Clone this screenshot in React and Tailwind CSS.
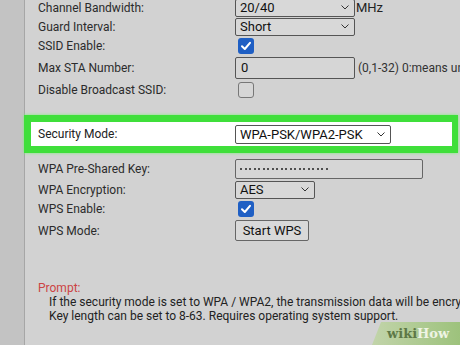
import React from 'react';

const font = { fontFamily: 'Roboto, "Liberation Sans", sans-serif' };

function Chevron() {
    return (
        <svg width="8" height="5" viewBox="0 0 8 5" className="shrink-0">
            <path d="M0.5 0.5 L4 4 L7.5 0.5" fill="none" stroke="#333" strokeWidth="1" />
        </svg>
    );
}

function Select({ value, className }) {
    return (
        <div className={`flex items-center justify-between border border-[#555] rounded-[2px] pl-[4px] pr-[5px] text-[13px] text-[#111] leading-none ${className}`}>
            <span>{value}</span>
            <Chevron />
        </div>
    );
}

function Checkbox({ checked }) {
    if (checked) {
        return (
            <div className="ml-[3px] w-[16px] h-[16px] rounded-[3px] bg-[#1f5fc4] flex items-center justify-center">
                <svg width="12" height="12" viewBox="0 0 12 12">
                    <path d="M2 6.3 L4.8 9 L10 2.8" fill="none" stroke="#fff" strokeWidth="2" strokeLinecap="round" strokeLinejoin="round" />
                </svg>
            </div>
        );
    }
    return <div className="ml-[3px] w-[16px] h-[16px] rounded-[3px] border border-[#777] bg-[#d6d6d6]" />;
}

function Row({ label, height, children }) {
    return (
        <div className={`flex items-center ${height}`}>
            <div className="w-[197px] shrink-0 text-[12px] text-[#2b2b2b]">{label}</div>
            <div className="flex items-center">{children}</div>
        </div>
    );
}

export default function App() {
    return (
        <div className="relative flex w-[460px] h-[345px] overflow-hidden bg-[#d2d2d2]" style={font}>
            {/* left strip */}
            <div className="w-[25px] shrink-0 bg-[#c3c3c3] border-r border-[#a6a6a6]" />

            {/* settings panel */}
            <div className="flex-1 pl-[13px] whitespace-nowrap">
                <div className="-mt-[2px]">
                    <Row label="Channel Bandwidth:" height="h-[19px]">
                        <Select value="20/40" className="w-[120px] h-[18px] bg-[#d8d8d8]" />
                        <span className="ml-[1px] text-[13px] text-[#222]">MHz</span>
                    </Row>
                    <Row label="Guard Interval:" height="h-[19px]">
                        <Select value="Short" className="w-[120px] h-[18px] bg-[#d8d8d8]" />
                    </Row>
                    <Row label="SSID Enable:" height="h-[20px]">
                        <Checkbox checked />
                    </Row>
                    <Row label="Max STA Number:" height="h-[24px]">
                        <div className="w-[120px] h-[22px] border border-[#555] rounded-[2px] bg-[#d6d6d6] pl-[5px] flex items-center text-[13px] text-[#111]">0</div>
                        <span className="ml-[3px] text-[12px] text-[#333]">(0,1-32) 0:means unlimited</span>
                    </Row>
                    <Row label="Disable Broadcast SSID:" height="h-[19px]">
                        <Checkbox />
                    </Row>
                </div>

                {/* highlighted row */}
                <div className="mt-[16px] -ml-[14px] w-[434px] h-[38px] border-[7px] border-r-[6px] border-[#3fdf3a] bg-white pl-[7px] flex items-center shadow-[0_0_3px_#7cf07a]">
                    <div className="w-[197px] shrink-0 text-[12px] text-[#222]">Security Mode:</div>
                    <Select value="WPA-PSK/WPA2-PSK" className="w-[156px] h-[19px] bg-white" />
                </div>

                <div className="mt-[5px]">
                    <Row label="WPA Pre-Shared Key:" height="h-[22px]">
                        <div className="w-[188px] h-[20px] border border-[#666] rounded-[2px] bg-[#d6d6d6] pl-[4px] flex items-center gap-[2.5px]">
                            {Array.from({ length: 20 }).map((_, i) => (
                                <span key={i} className="w-[2px] h-[2px] rounded-full bg-[#222]" />
                            ))}
                        </div>
                    </Row>
                    <Row label="WPA Encryption:" height="h-[19px]">
                        <Select value="AES" className="w-[80px] h-[18px] bg-[#d8d8d8]" />
                    </Row>
                    <Row label="WPS Enable:" height="h-[20px]">
                        <Checkbox checked />
                    </Row>
                    <Row label="WPS Mode:" height="h-[23px]">
                        <div className="w-[74px] h-[21px] border border-[#666] rounded-[2px] bg-[#d9d9d9] flex items-center justify-center text-[13px] text-[#111]">
                            Start WPS
                        </div>
                    </Row>
                </div>

                {/* prompt */}
                <div className="mt-[39px] text-[12px] leading-[14px]">
                    <div className="text-[#cc4444]">Prompt:</div>
                    <div className="pl-[11px] text-[#222]">
                        If the security mode is set to WPA / WPA2, the transmission data will be encrypted.
                    </div>
                    <div className="pl-[11px] text-[#222]">
                        Key length can be set to 8-63. Requires operating system support.
                    </div>
                </div>
            </div>

            {/* watermark */}
            <div className="absolute right-0 bottom-0 w-[88px] h-[23px] bg-gradient-to-r from-[#c2d4aa] to-[#9dc27c] [clip-path:polygon(9px_0,100%_0,100%_100%,0_100%)] flex items-center pl-[15px]">
                <span className="text-[13px] font-bold text-[#5d7846]" style={{ fontFamily: '"DejaVu Serif", serif' }}>wiki</span>
                <span className="text-[13px] font-bold text-[#eef4e4]" style={{ fontFamily: '"DejaVu Serif", serif' }}>How</span>
            </div>
        </div>
    );
}
